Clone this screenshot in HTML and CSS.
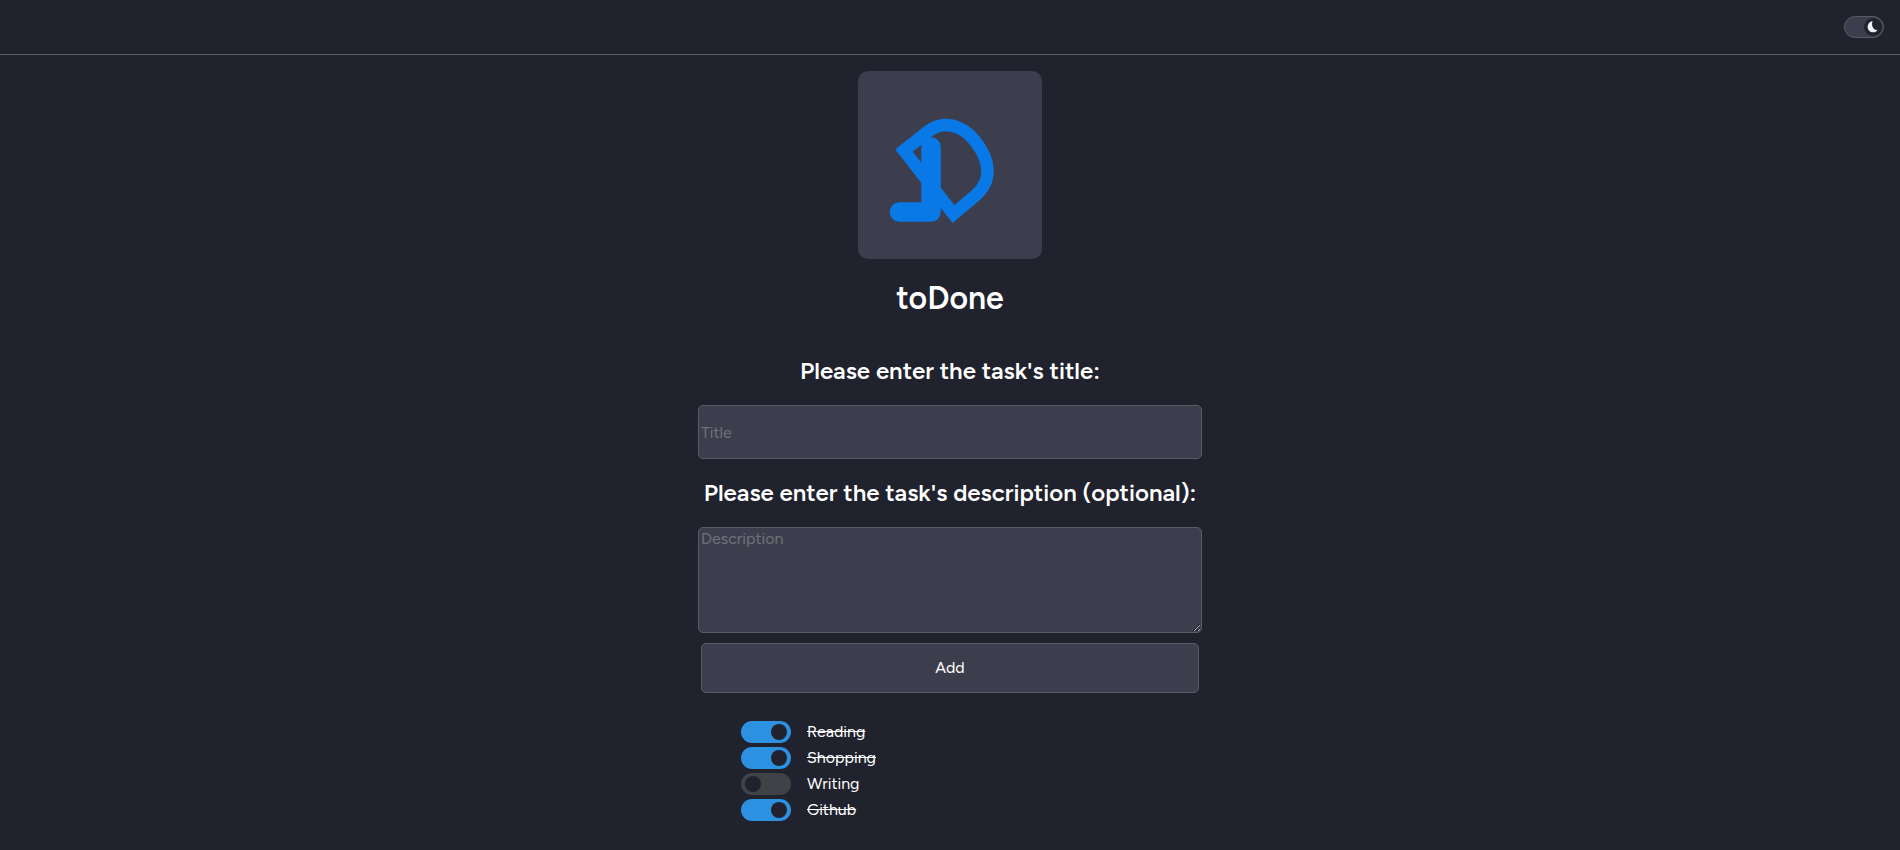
FILE: index.html
```html
<!DOCTYPE html>
<html lang="en">
<head>
<meta charset="utf-8">
<title>toDone</title>
<link rel="stylesheet" href="styles.css">
</head>
<body>
<header class="topbar">
  <label class="theme">
    <input class="theme-input" type="checkbox" checked aria-label="Dark theme">
    <span class="theme-knob">
      <svg viewBox="0 0 18 18" width="18" height="18" aria-hidden="true"><path d="M8.600 3C5.600 3.800 3.600 5.900 3.600 8.700C3.600 12 6.100 14.300 9.200 14.300C11 14.300 12.700 13.500 13.500 12C11 12.200 8.900 10.500 8.300 8C7.900 6.200 8 4.500 8.600 3Z" fill="#eeeff6"/></svg>
    </span>
  </label>
</header>
<main class="page">
  <div class="logo">
    <svg viewBox="0 0 184 188" width="184" height="188" role="img" aria-label="toDone logo">
      <g fill="none" stroke="#0a79e8">
        <path d="M46 79.500L70 60.500C86 48 105 55 117 70C133 90 134 110 118 124L95.500 143Z" stroke-width="12.500"/>
        <path d="M73 76V141H41.500" stroke-width="19.500" stroke-linecap="round" stroke-linejoin="round"/>
      </g>
    </svg>
  </div>
  <h1 class="brand">toDone</h1>
  <form class="form">
    <label class="prompt" for="title">Please enter the task's title:</label>
    <input class="field" id="title" type="text" placeholder="Title">
    <label class="prompt" for="description">Please enter the task's description (optional):</label>
    <textarea class="field area" id="description" placeholder="Description"></textarea>
    <button class="add" type="button">Add</button>
  </form>
  <ul class="tasks">
    <li><label class="task"><input class="switch" type="checkbox" checked><span class="name">Reading</span></label></li>
    <li><label class="task"><input class="switch" type="checkbox" checked><span class="name">Shopping</span></label></li>
    <li><label class="task"><input class="switch" type="checkbox"><span class="name">Writing</span></label></li>
    <li><label class="task"><input class="switch" type="checkbox" checked><span class="name">Github</span></label></li>
  </ul>
</main>
</body>
</html>
```
FILE: styles.css
```css
* { box-sizing: border-box; }
body {
  margin: 0;
  background: #20222d;
  color: #fff;
  font: 16px/20px Figtree, Inter, sans-serif;
}
.topbar {
  display: flex;
  justify-content: flex-end;
  padding: 16px;
  border-bottom: 1px solid #5f6063;
}
.theme {
  display: flex;
  align-items: center;
  justify-content: flex-end;
  width: 40px;
  height: 22px;
  border: 1px solid #5b5c62;
  border-radius: 11px;
  background: #3d3e4d;
}
.theme-input { position: absolute; opacity: 0; }
.theme-knob {
  display: flex;
  width: 18px;
  height: 18px;
  margin-right: 1px;
  border-radius: 50%;
  background: #20222d;
}
.page {
  display: flex;
  flex-direction: column;
  align-items: center;
  padding: 16px 16px 24px;
}
.logo {
  display: flex;
  border-radius: 10px;
  background: #3d3e4d;
}
.brand {
  margin: 20px 0 40px;
  font-size: 32px;
  line-height: 38px;
  font-weight: 600;
}
.form {
  display: flex;
  flex-direction: column;
  align-items: center;
  width: 504px;
  max-width: 100%;
}
.prompt {
  margin-bottom: 20px;
  font-size: 24px;
  line-height: 28px;
  font-weight: 600;
  text-align: center;
}
.field {
  width: 100%;
  height: 54px;
  margin-bottom: 20px;
  padding: 2px;
  border: 1px solid #5b5c62;
  border-radius: 5px;
  background: #3d3e4d;
  color: #fff;
  font: inherit;
}
.field::placeholder { color: #717279; }
.area {
  height: 106px;
  margin-bottom: 10px;
  padding: 1px 2px;
  resize: both;
}
.add {
  width: calc(100% - 6px);
  height: 50px;
  border: 1px solid #5b5c62;
  border-radius: 5px;
  background: #3d3e4d;
  color: #fff;
  font: inherit;
}
.tasks {
  display: grid;
  gap: 4px;
  width: 418px;
  max-width: 100%;
  margin: 28px 0 0;
  padding: 0;
  list-style: none;
}
.task {
  display: flex;
  align-items: center;
  gap: 16px;
}
.switch {
  appearance: none;
  display: flex;
  align-items: center;
  width: 50px;
  height: 22px;
  margin: 0;
  padding: 0 4px;
  border-radius: 11px;
  background: #414247;
}
.switch::before {
  content: "";
  width: 16px;
  height: 16px;
  border-radius: 50%;
  background: #20222d;
}
.switch:checked {
  justify-content: flex-end;
  background: #2d91e2;
}
.switch:checked + .name { text-decoration: line-through; }
```
